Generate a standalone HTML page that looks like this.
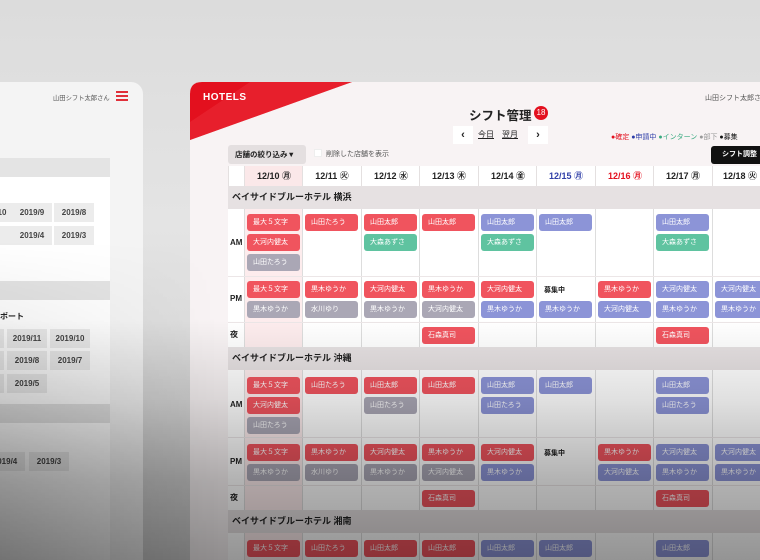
<!DOCTYPE html>
<html><head><meta charset="utf-8"><style>
*{margin:0;padding:0;box-sizing:border-box}
html,body{width:760px;height:560px;overflow:hidden}
body{position:relative;background:linear-gradient(#dcdcdc,#e4e4e4 40%,#cfcfcf);font-family:"Liberation Sans","Noto Sans CJK JP",sans-serif;color:#222}
.a{position:absolute}
.lp{left:-20px;top:82px;width:163px;height:478px;background:#f4f4f4;border-radius:0 12px 0 0}
.bar{position:absolute;left:0;width:110px;height:19px;background:#e4e4e4}
.wb{position:absolute;left:0;width:110px;background:#fff}
.yb{position:absolute;width:40px;height:19px;background:#ececec;font-size:8px;font-weight:bold;color:#444;text-align:center;line-height:19px}
.mp{left:190px;top:82px;width:570px;height:478px;background:#f8f3f4;border-radius:12px 0 0 0;overflow:hidden}
.col{position:absolute;top:166px;height:394px;border-left:1px solid #ddd}
.hd{position:absolute;top:166px;height:20px;font-size:9px;font-weight:bold;text-align:center;line-height:20px;background:#fff;border-left:1px solid #e4e0e0}
.sec{position:absolute;left:228px;width:532px;height:23px;background:#e6e1e2;font-size:9px;font-weight:bold;line-height:23px;padding-left:4px}
.rl{position:absolute;left:230px;font-size:8px;font-weight:bold}
.rb{position:absolute;left:228px;width:532px;border-top:1px solid #ece6e7}
.c{position:absolute;width:53px;height:17px;border-radius:3px;color:#fff;font-size:7px;line-height:17px;padding-left:6px;white-space:nowrap;overflow:hidden}
.r{background:#f0545e}.g{background:#aaa7b5}.b{background:#8c94d7}.n{background:#5fc3a0}
.t{position:absolute;font-size:7px;font-weight:bold}
</style></head><body>
<div class="a lp"></div>
<div class="a" style="left:53px;top:93px;font-size:6.3px;color:#555;white-space:nowrap">山田シフト太郎さん</div>
<div class="a" style="left:116px;top:91px;width:12px;height:2px;background:#e0303a;box-shadow:0 4px 0 #e0303a,0 8px 0 #e0303a"></div>
<div class="bar" style="top:158px"></div>
<div class="wb" style="top:177px;height:104px"></div>
<div class="yb" style="left:-28px;top:203px">2019/10</div>
<div class="yb" style="left:12px;top:203px">2019/9</div>
<div class="yb" style="left:54px;top:203px">2019/8</div>
<div class="yb" style="left:-28px;top:226px"></div>
<div class="yb" style="left:12px;top:226px">2019/4</div>
<div class="yb" style="left:54px;top:226px">2019/3</div>
<div class="bar" style="top:281px"></div>
<div class="wb" style="top:300px;height:104px"></div>
<div class="a" style="left:0;top:311px;font-size:8px;font-weight:bold">ポート</div>
<div class="yb" style="left:-36px;top:329px"></div>
<div class="yb" style="left:7px;top:329px">2019/11</div>
<div class="yb" style="left:50px;top:329px">2019/10</div>
<div class="yb" style="left:-36px;top:351px"></div>
<div class="yb" style="left:7px;top:351px">2019/8</div>
<div class="yb" style="left:50px;top:351px">2019/7</div>
<div class="yb" style="left:-36px;top:374px"></div>
<div class="yb" style="left:7px;top:374px">2019/5</div>
<div class="bar" style="top:404px"></div>
<div class="wb" style="top:423px;height:137px"></div>
<div class="yb" style="left:-15px;top:452px">2019/4</div>
<div class="yb" style="left:29px;top:452px">2019/3</div>

<div class="a mp"></div>
<svg class="a" style="left:190px;top:82px" width="170" height="60"><path d="M0 12 Q0 0 12 0 L162 0 L0 58 Z" fill="#e3101e"/><path d="M60 0 L162 0 L0 58 L0 40 Z" fill="#ea2a35" opacity=".6"/></svg>
<div class="a" style="left:203px;top:92px;color:#fff;font-weight:bold;font-size:10px;letter-spacing:.5px">HOTELS</div>
<div class="a" style="left:469px;top:105px;font-size:12.5px;font-weight:bold;white-space:nowrap">シフト管理</div>
<div class="a" style="left:534px;top:106px;width:14px;height:14px;border-radius:7px;background:#e3101e;color:#fff;font-size:8px;text-align:center;line-height:14px">18</div>
<div class="a" style="left:453px;top:126px;width:20px;height:18px;background:#fff;font-size:11px;font-weight:bold;text-align:center;line-height:18px">&lsaquo;</div>
<div class="a" style="left:478px;top:129px;font-size:8px;text-decoration:underline">今日</div>
<div class="a" style="left:502px;top:129px;font-size:8px;text-decoration:underline">翌月</div>
<div class="a" style="left:528px;top:126px;width:20px;height:18px;background:#fff;font-size:11px;font-weight:bold;text-align:center;line-height:18px">&rsaquo;</div>
<div class="a" style="left:705px;top:93px;font-size:7px;color:#555;white-space:nowrap">山田シフト太郎さん</div>
<div class="a" style="left:611px;top:132px;font-size:7px;white-space:nowrap"><span style="color:#e3101e">●確定</span> <span style="color:#2c3ca8">●申請中</span> <span style="color:#3aaa80">●インターン</span> <span style="color:#999">●部下</span> <span style="color:#111">●募集</span></div>
<div class="a" style="left:711px;top:146px;width:60px;height:18px;background:#111;border-radius:3px;color:#fff;font-size:7px;font-weight:bold;line-height:18px;padding-left:11px">シフト調整</div>
<div class="a" style="left:228px;top:145px;width:78px;height:19px;background:#e4dfe0;border-radius:3px;font-size:7.5px;font-weight:bold;line-height:19px;padding-left:7px;white-space:nowrap">店舗の絞り込み▼</div>
<div class="a" style="left:314px;top:149px;width:8px;height:8px;background:#fff;border:1px solid #eee"></div>
<div class="a" style="left:326px;top:149px;font-size:7px;color:#555">削除した店舗を表示</div>

<div class="a" style="left:228px;top:166px;width:532px;height:394px;background:#fff"></div>
<div class="a" style="left:244px;top:166px;width:59px;height:394px;background:#fdeced"></div>
<div class="col" style="left:244px"></div><div class="col" style="left:302px"></div><div class="col" style="left:361px"></div><div class="col" style="left:419px"></div><div class="col" style="left:478px"></div><div class="col" style="left:536px"></div><div class="col" style="left:595px"></div><div class="col" style="left:653px"></div><div class="col" style="left:712px"></div>
<div class="hd" style="left:228px;width:16px"></div>
<div class="hd" style="left:244px;width:59px;background:#fbe8e9">12/10 ㊊</div>
<div class="hd" style="left:302px;width:59px">12/11 ㊋</div>
<div class="hd" style="left:361px;width:59px">12/12 ㊌</div>
<div class="hd" style="left:419px;width:59px">12/13 ㊍</div>
<div class="hd" style="left:478px;width:59px">12/14 ㊎</div>
<div class="hd" style="left:536px;width:59px;color:#3140a8">12/15 ㊊</div>
<div class="hd" style="left:595px;width:59px;color:#e3101e">12/16 ㊊</div>
<div class="hd" style="left:653px;width:59px">12/17 ㊊</div>
<div class="hd" style="left:712px;width:48px;text-align:left;padding-left:10px">12/18 ㊋</div>

<div class="sec" style="top:186px">ベイサイドブルーホテル 横浜</div>
<div class="rl" style="top:238px">AM</div><div class="rb" style="top:276px"></div>
<div class="rl" style="top:294px">PM</div><div class="rb" style="top:322px"></div>
<div class="rl" style="top:329px">夜</div>
<div class="sec" style="top:347px">ベイサイドブルーホテル 沖縄</div>
<div class="rl" style="top:400px">AM</div><div class="rb" style="top:437px"></div>
<div class="rl" style="top:457px">PM</div><div class="rb" style="top:485px"></div>
<div class="rl" style="top:492px">夜</div>
<div class="sec" style="top:510px">ベイサイドブルーホテル 湘南</div>

<div class="c r" style="left:247px;top:214px">最大５文字</div><div class="c r" style="left:247px;top:234px">大河内健太</div><div class="c g" style="left:247px;top:254px">山田たろう</div>
<div class="c r" style="left:305px;top:214px">山田たろう</div>
<div class="c r" style="left:364px;top:214px">山田太郎</div><div class="c n" style="left:364px;top:234px">大森あずさ</div>
<div class="c r" style="left:422px;top:214px">山田太郎</div>
<div class="c b" style="left:481px;top:214px">山田太郎</div><div class="c n" style="left:481px;top:234px">大森あずさ</div>
<div class="c b" style="left:539px;top:214px">山田太郎</div>
<div class="c b" style="left:656px;top:214px">山田太郎</div><div class="c n" style="left:656px;top:234px">大森あずさ</div>
<div class="c r" style="left:247px;top:281px">最大５文字</div><div class="c g" style="left:247px;top:301px">黒木ゆうか</div>
<div class="c r" style="left:305px;top:281px">黒木ゆうか</div><div class="c g" style="left:305px;top:301px">水川ゆり</div>
<div class="c r" style="left:364px;top:281px">大河内健太</div><div class="c g" style="left:364px;top:301px">黒木ゆうか</div>
<div class="c r" style="left:422px;top:281px">黒木ゆうか</div><div class="c g" style="left:422px;top:301px">大河内健太</div>
<div class="c r" style="left:481px;top:281px">大河内健太</div><div class="c b" style="left:481px;top:301px">黒木ゆうか</div>
<div class="t" style="left:544px;top:285px">募集中</div><div class="c b" style="left:539px;top:301px">黒木ゆうか</div>
<div class="c r" style="left:598px;top:281px">黒木ゆうか</div><div class="c b" style="left:598px;top:301px">大河内健太</div>
<div class="c b" style="left:656px;top:281px">大河内健太</div><div class="c b" style="left:656px;top:301px">黒木ゆうか</div>
<div class="c b" style="left:715px;top:281px">大河内健太</div><div class="c b" style="left:715px;top:301px">黒木ゆうか</div>
<div class="c r" style="left:422px;top:327px">石森真司</div><div class="c r" style="left:656px;top:327px">石森真司</div>
<div class="c r" style="left:247px;top:377px">最大５文字</div><div class="c r" style="left:247px;top:397px">大河内健太</div><div class="c g" style="left:247px;top:417px">山田たろう</div>
<div class="c r" style="left:305px;top:377px">山田たろう</div>
<div class="c r" style="left:364px;top:377px">山田太郎</div><div class="c g" style="left:364px;top:397px">山田たろう</div>
<div class="c r" style="left:422px;top:377px">山田太郎</div>
<div class="c b" style="left:481px;top:377px">山田太郎</div><div class="c b" style="left:481px;top:397px">山田たろう</div>
<div class="c b" style="left:539px;top:377px">山田太郎</div>
<div class="c b" style="left:656px;top:377px">山田太郎</div><div class="c b" style="left:656px;top:397px">山田たろう</div>
<div class="c r" style="left:247px;top:444px">最大５文字</div><div class="c g" style="left:247px;top:464px">黒木ゆうか</div>
<div class="c r" style="left:305px;top:444px">黒木ゆうか</div><div class="c g" style="left:305px;top:464px">水川ゆり</div>
<div class="c r" style="left:364px;top:444px">大河内健太</div><div class="c g" style="left:364px;top:464px">黒木ゆうか</div>
<div class="c r" style="left:422px;top:444px">黒木ゆうか</div><div class="c g" style="left:422px;top:464px">大河内健太</div>
<div class="c r" style="left:481px;top:444px">大河内健太</div><div class="c b" style="left:481px;top:464px">黒木ゆうか</div>
<div class="t" style="left:544px;top:448px">募集中</div>
<div class="c r" style="left:598px;top:444px">黒木ゆうか</div><div class="c b" style="left:598px;top:464px">大河内健太</div>
<div class="c b" style="left:656px;top:444px">大河内健太</div><div class="c b" style="left:656px;top:464px">黒木ゆうか</div>
<div class="c b" style="left:715px;top:444px">大河内健太</div><div class="c b" style="left:715px;top:464px">黒木ゆうか</div>
<div class="c r" style="left:422px;top:490px">石森真司</div><div class="c r" style="left:656px;top:490px">石森真司</div>
<div class="c r" style="left:247px;top:540px">最大５文字</div>
<div class="c r" style="left:305px;top:540px">山田たろう</div>
<div class="c r" style="left:364px;top:540px">山田太郎</div>
<div class="c r" style="left:422px;top:540px">山田太郎</div>
<div class="c b" style="left:481px;top:540px">山田太郎</div>
<div class="c b" style="left:539px;top:540px">山田太郎</div>
<div class="c b" style="left:656px;top:540px">山田太郎</div>

<div class="a" style="left:0;top:0;width:760px;height:560px;background:linear-gradient(rgba(0,0,0,0) 0,rgba(0,0,0,0) 320px,rgba(0,0,0,.12) 400px,rgba(0,0,0,.3) 480px,rgba(0,0,0,.42) 560px)"></div>
<div class="a" style="left:0;top:240px;width:220px;height:320px;background:linear-gradient(90deg,rgba(0,0,0,.22),rgba(0,0,0,0));-webkit-mask-image:linear-gradient(rgba(0,0,0,0),#000);mask-image:linear-gradient(rgba(0,0,0,0),#000)"></div>
</body></html>
